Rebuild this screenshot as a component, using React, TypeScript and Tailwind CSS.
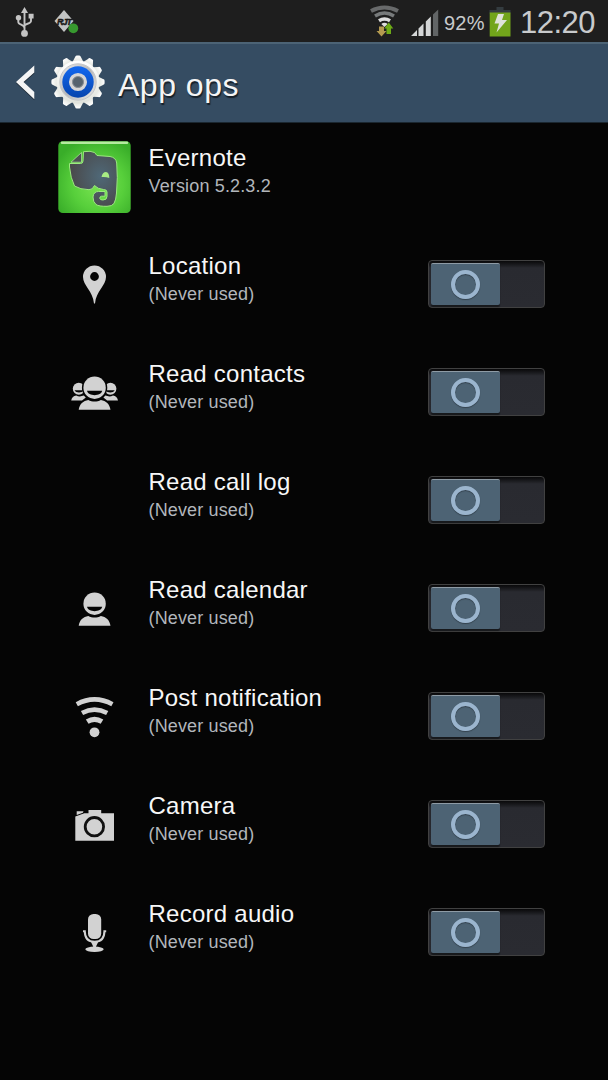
import { ReactNode, useState } from "react";

interface Op {
  name: string;
  icon: ReactNode;
}

const Person = () => (
  <>
    <circle cx="36.6" cy="30.7" r="11.2" />
    <path d="M20.7 52.8c.8-6 4.6-8.8 9.600-9.800 4 2 8.600 2 12.600 0 5 1 8.800 3.800 9.600 9.800z" />
    <path d="M29 33.800h15.200c-1.200 5.800-14 5.800-15.200 0z" fill="#050505" />
  </>
);

const SidePerson = () => (
  <>
    <circle cx="20.8" cy="31.8" r="6" />
    <path d="M13.200 43.600c.5-2.800 2.400-4.600 5-5 2.500 1.200 5 1 7.600 0l2 2-3.800 3z" />
    <path d="M16.500 33.300h9c-1.500 3-7.500 3-9 0z" fill="#050505" />
  </>
);

const ops: Op[] = [
  {
    name: "Location",
    icon: (
      <path
        fillRule="evenodd"
        d="M36.500 16.500a11.500 11.500 0 0 0-11.500 11.500c0 8.500 9.800 14 11 26.500h1c1.200-12.500 11-18 11-26.500a11.500 11.500 0 0 0-11.500-11.500zm0 6.600a4.400 4.400 0 1 1 0 8.800 4.400 4.400 0 0 1 0-8.800z"
      />
    ),
  },
  {
    name: "Read contacts",
    icon: (
      <>
        <SidePerson />
        <g transform="translate(73.2 0) scale(-1 1)">
          <SidePerson />
        </g>
        <circle cx="36.6" cy="30.7" r="12.7" fill="#050505" />
        <Person />
      </>
    ),
  },
  { name: "Read call log", icon: null },
  { name: "Read calendar", icon: <Person /> },
  {
    name: "Post notification",
    icon: (
      <>
        <g fill="none" stroke="#d2d2d2" strokeWidth="4.6">
          <path d="M18.800 23.200q17.700-9.600 35.600 0" />
          <path d="M24 32q12.500-6.800 25.200 0" />
          <path d="M29.200 40.700q7.300-4.600 14.800 0" strokeWidth="5" />
        </g>
        <circle cx="36.5" cy="51.3" r="4.9" />
      </>
    ),
  },
  {
    name: "Camera",
    icon: (
      <>
        <path d="M17.300 27.500l9-3.200h4.200v-3.300h12.700v3.300h12.800v27.500h-38.700z" />
        <path d="M18.700 22.300h6.800l-.6 1.500-6.200 2.200z" />
        <circle cx="36.4" cy="37.7" r="9.2" fill="none" stroke="#111" strokeWidth="2.8" />
      </>
    ),
  },
  {
    name: "Record audio",
    icon: (
      <>
        <rect x="30" y="17" width="13.2" height="25" rx="5.5" />
        <path
          d="M25 34.300h1.800c0 7 3.800 10.500 9.800 10.500s9.800-3.500 9.800-10.500h1.800M36.600 45v6"
          fill="none"
          stroke="#d2d2d2"
          strokeWidth="2"
        />
        <path d="M33 45h7.200l-2.400 5h-2.400z" />
        <ellipse cx="36.5" cy="52.3" rx="9.2" ry="2.7" />
      </>
    ),
  },
];

const StatusBar = () => (
  <div className="flex h-[42px] items-center justify-between bg-[#1e1e1e] text-[#c8cacc]">
    <div className="flex">
      <svg width="48" height="42" fill="#c4c4c4">
        <path d="M24.500 7l3.500 6h-7z" />
        <path
          d="M24.500 11v22M18.300 18v4c0 3 6.200 2.500 6.200 6M31 16v5c0 3-6.500 2.500-6.500 5"
          fill="none"
          stroke="#c4c4c4"
          strokeWidth="1.9"
        />
        <circle cx="18.5" cy="17.8" r="2.7" />
        <path d="M28.600 13.800h5v4.600h-5z" />
        <circle cx="24.5" cy="33.4" r="3.400" />
      </svg>
      <svg width="40" height="42">
        <path d="M16 10l9.500 11-9.500 11-9.500-11z" fill="#c2c4c4" />
        <text
          x="9"
          y="24.500"
          fontSize="9"
          textLength="15"
          fontWeight="bold"
          fontStyle="italic"
          fontFamily="Liberation Sans, sans-serif"
          stroke="#1a1a1a"
          strokeWidth=".5"
          fill="#1a1a1a"
        >
          RJT
        </text>
        <circle cx="25.3" cy="28.3" r="4.9" fill="#37992f" />
      </svg>
    </div>
    <div className="flex h-full items-center">
      <svg width="75" height="42">
        <g fill="none">
          <path d="M2 11Q15.500 4 29 11" stroke="#686a6b" strokeWidth="4" />
          <path d="M6 16q9.500-5.800 19 0" stroke="#777a7b" strokeWidth="3.5" />
          <path d="M10 20.800q5.500-3.600 11 0" stroke="#dedede" strokeWidth="3.5" />
        </g>
        <path d="M12.300 24q3.200-2.500 6.400 0l-3.200 3z" fill="#dedede" />
        <path d="M10 26.500h5v4.500h2.500l-5 5.500-5-5.500h2.500z" fill="#b49a50" />
        <path d="M17.500 34h4.500v-5.500h2.300l-4.500-6-4.600 6h2.300z" fill="#6daa16" />
        <path d="M42 36l6-6v6zM49.500 28.500l5-5v12.500h-5zM56.800 21.500l5-5v19.500h-5z" fill="#d5d7d8" />
        <path d="M64 14.500l5.200-5v26.500H64z" fill="#626566" />
      </svg>
      <span className="w-[45px] pt-[3px] text-[20px] leading-[42px] tracking-[0.2px] whitespace-nowrap">
        92%
      </span>
      <svg width="31" height="42">
        <path d="M7.500 7h7v3h7v3.500h-21V10h7z" fill="#343c40" />
        <path d="M.7 12.500h20.800v24H.7z" fill="#72a51b" />
        <path d="M9 14h6l-2 6h5L7.500 32.500l2.500-9H5.500z" fill="#dfe3da" />
      </svg>
      <span className="w-[88px] pt-[3px] text-[31px] leading-[42px] tracking-[-0.5px] whitespace-nowrap">
        12:20
      </span>
    </div>
  </div>
);

const Gear = () => (
  <svg width="54" height="58" viewBox="0 0 54 58">
    <defs>
      <linearGradient id="metal" x2="0" y2="1">
        <stop stopColor="#fff" />
        <stop offset="1" stopColor="#e0e3dc" />
      </linearGradient>
      <linearGradient id="blue" x2="0" y2="1">
        <stop stopColor="#1268f0" />
        <stop offset="1" stopColor="#0645ae" />
      </linearGradient>
      <linearGradient id="steel" x2="1" y2="1">
        <stop stopColor="#eee" />
        <stop offset=".5" stopColor="#b4b6b8" />
        <stop offset="1" stopColor="#eee" />
      </linearGradient>
    </defs>
    <g fill="url(#metal)">
      {[0, 30, 60, 90, 120, 150, 180, 210, 240, 270, 300, 330].map((angle) => (
        <path
          key={angle}
          d="M21.500 9l2.600-5q.4-1.600 1.600-1.600h2.600q1.200 0 1.600 1.600l2.600 5z"
          transform={`rotate(${angle} 27 29)`}
        />
      ))}
      <circle cx="27" cy="29" r="21.5" />
    </g>
    <circle cx="27" cy="29" r="18.2" fill="url(#steel)" stroke="#c4c6c8" />
    <circle cx="27" cy="29" r="15.7" fill="url(#blue)" />
    <circle cx="27" cy="29" r="7.300" fill="#526271" stroke="#d6d6d6" strokeWidth="3.500" />
    <circle cx="27" cy="29" r="5.500" fill="#56636e" stroke="#8c9297" />
  </svg>
);

const Header = () => (
  <header className="flex h-[81px] items-center border-t-2 border-b border-t-[#4c6375] border-b-[#1b2730] bg-[#354c62] pb-[2px]">
    <svg width="51" height="58" className="drop-shadow-[0_1px_0_rgba(0,0,0,0.5)]">
      <path d="M34.300 12.500v7L23.500 29l10.800 10v7.300L16 29z" fill="#f5f5f5" />
    </svg>
    <Gear />
    <h1 className="pt-[5px] pl-[13px] text-[32px] leading-9 tracking-[0.5px] text-[#f5f5f5] [text-shadow:1px_2px_1px_rgba(0,0,0,0.6)]">
      App ops
    </h1>
  </header>
);

const EvernoteLogo = () => (
  <svg width="73" height="72" viewBox="0 0 73 72">
    <defs>
      <radialGradient id="leaf" cx=".55" cy=".6" r=".65">
        <stop stopColor="#7be552" />
        <stop offset=".55" stopColor="#57cf3b" />
        <stop offset="1" stopColor="#39ad29" />
      </radialGradient>
      <radialGradient id="hide" cx=".65" cy=".45" r=".6">
        <stop stopColor="#4f6877" />
        <stop offset="1" stopColor="#4a4b4d" />
      </radialGradient>
    </defs>
    <rect x=".3" y=".3" width="72.4" height="71.7" rx="4.5" fill="url(#leaf)" />
    <path d="M4 1.800h65" stroke="#b5eba0" strokeWidth="2.5" strokeLinecap="round" />
    <path
      d="M25.500 10.700Q33 9.500 36.500 11.500L39 14.500 52 15.500Q58 16.500 58.700 22 60 36 58.500 52 58 59 56 62.500 54 65.300 49 65.300 41 65.500 38 63.500 35 61 35 56 35.500 50.500 40.500 50.500H47V55.200H43.500Q41.500 55.500 41.800 57.500 42 59 45 59 49 59 49 55.500V51Q49 48.500 45.500 48.500 39.500 48 36.500 44.500 34.500 49 31 48.700 22 48.500 16.500 45 12.500 37 11.500 26V22.500H22.500Q25 22.500 25 20z"
      fill="url(#hide)"
      stroke="#9bea7f"
      strokeWidth="1"
    />
    <path d="M23.500 11.500v9.700H13z" fill="#4c5152" stroke="#b5e99f" strokeWidth=".7" />
    <path d="M43.500 36q1-5 4.500-5 3.300.5 3.300 6-3.500-1.500-7.800-1z" fill="#a8ec84" />
  </svg>
);

const Toggle = ({ label }: { label: string }) => {
  const [allowed, setAllowed] = useState(false);

  return (
    <button
      role="switch"
      aria-label={label}
      aria-checked={allowed}
      onClick={() => setAllowed(!allowed)}
      className={`mt-[29px] flex h-12 w-[117px] rounded-[4px] border border-[#414141] bg-linear-to-b from-[#09090a] via-[#292a30] via-15% to-[#2a2b31] p-[2px] ${
        allowed ? "justify-end" : "justify-start"
      }`}
    >
      <span className="flex h-[42px] w-[69px] items-center justify-center rounded-[2px] border-t border-t-[#8e9ba5] bg-[#4d6374] pr-px shadow-[0_2px_1px_#17191c]">
        <span className="size-[29px] rounded-full border-[4.5px] border-[#9bb5ce] shadow-[0_1px_1px_#34424e,inset_0_1px_1px_#34424e]" />
      </span>
    </button>
  );
};

interface RowProps {
  icon: ReactNode;
  title: string;
  subtitle: string;
  children?: ReactNode;
}

const Row = ({ icon, title, subtitle, children }: RowProps) => (
  <div className="flex h-[108px] items-start pr-[63px] pl-[58px]">
    <div className="mt-[18px] w-[73px]">{icon}</div>
    <div className="flex-1 pt-[21px] pl-[17.5px]">
      <h2 className="text-[24px] leading-7 tracking-[0.25px] text-[#f7f7f7]">{title}</h2>
      <p className="text-[18px] leading-7 tracking-[0.15px] text-[#b2b6bb]">{subtitle}</p>
    </div>
    {children}
  </div>
);

export default function App() {
  return (
    <div className="min-h-screen w-[608px] bg-[#050505] font-['Liberation_Sans',Arial,sans-serif]">
      <StatusBar />
      <Header />
      <main>
        <Row icon={<EvernoteLogo />} title="Evernote" subtitle="Version 5.2.3.2" />
        {ops.map((op) => (
          <Row
            key={op.name}
            icon={
              <svg width="73" height="72" fill="#d2d2d2">
                {op.icon}
              </svg>
            }
            title={op.name}
            subtitle="(Never used)"
          >
            <Toggle label={op.name} />
          </Row>
        ))}
      </main>
    </div>
  );
}
